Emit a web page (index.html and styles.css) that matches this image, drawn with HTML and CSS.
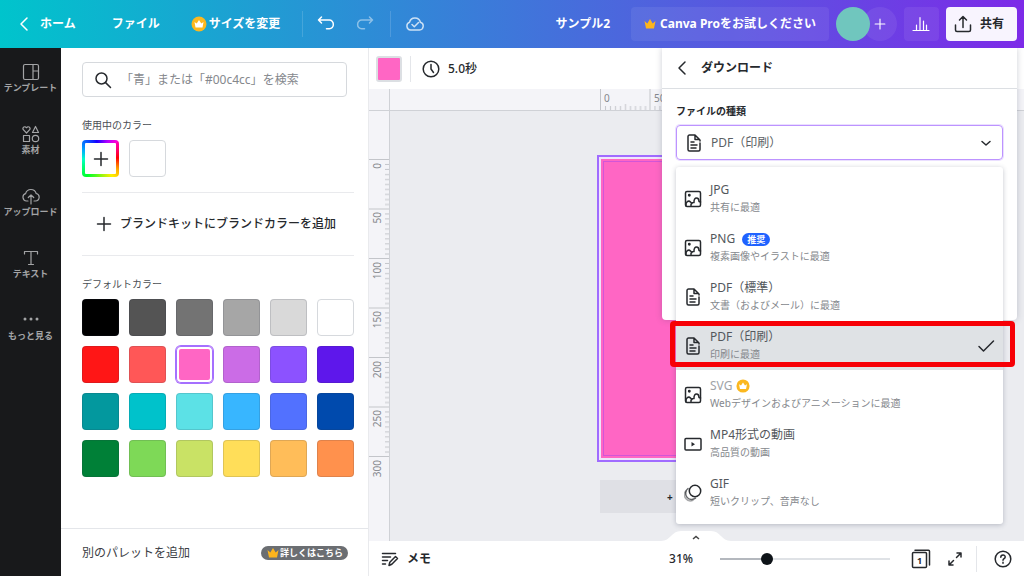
FILE: index.html
```html
<!DOCTYPE html>
<html lang="ja">
<head>
<meta charset="utf-8">
<meta name="viewport" content="width=device-width, initial-scale=1">
<title>サンプル2</title>
<link rel="stylesheet" href="styles.css">
</head>
<body>
<svg class="defs" aria-hidden="true">
  <symbol id="crown" viewBox="0 0 12 12"><path d="M.5 3l2.800 2.500L6 1l2.700 4.500L11.500 3l-1.500 7.500H2z" fill="currentColor"/></symbol>
  <symbol id="coin" viewBox="0 0 16 16"><circle cx="8" cy="8" r="7.500" fill="#fbb81f"/><path d="M3.500 6l2.200 1.500L8 4l2.300 3.500L12.500 6l-1 5.500h-7z" fill="#fff"/></symbol>
  <symbol id="back" viewBox="0 0 12 16"><path d="M9 2L3 8l6 6"/></symbol>
  <symbol id="plus" viewBox="0 0 16 16"><path d="M8 1.500v13M1.500 8h13"/></symbol>
  <symbol id="image" viewBox="0 0 18 18"><rect x="1.500" y="1.500" width="15" height="15" rx="1.500"/><path d="M2 15.500C1.500 12 4.500 10 6.500 12L8 13.500M7 16c-.5-2.500 1.500-4 3-3.500C9.800 9.500 11 8 12.500 8S15 9.500 15 11.500l1.500.5"/><circle cx="5.300" cy="5.300" r=".7" fill="currentColor"/></symbol>
  <symbol id="doc" viewBox="0 0 18 18"><path d="M10 1H4.500A1.500 1.500 0 003 2.500v13A1.500 1.500 0 004.500 17h9a1.500 1.500 0 001.500-1.500V9M10 1l5 5v1M10 1v4.500h4.500M6 8h3M6 11h6M6 14h5"/></symbol>
</svg>

<header class="topbar">
  <nav class="topbar-left">
    <a class="home" href="#"><svg class="line i-back"><use href="#back"/></svg>ホーム</a>
    <button class="bare file">ファイル</button>
    <button class="bare resize"><svg class="i16"><use href="#coin"/></svg>サイズを変更</button>
    <span class="vline"></span>
    <button class="bare" aria-label="元に戻す"><svg class="line i18" viewBox="0 0 18 18"><path d="M4.500 2L1.500 5l3 3M1.500 5H12a4 4 0 014.300 4.300A4 4 0 0112 13.800H9.500"/></svg></button>
    <button class="bare redo" aria-label="やり直す"><svg class="line i18" viewBox="0 0 18 18"><path d="M13.500 2l3 3-3 3M16.500 5H6a4 4 0 00-4.300 4.300A4 4 0 006 13.800h2.500"/></svg></button>
    <span class="vline"></span>
    <button class="bare cloud" aria-label="保存済み"><svg class="line i20" viewBox="0 0 20 20"><path d="M5.500 16A4 4 0 014.500 8.300 5.600 5.600 0 0115.400 8.200a4 4 0 01-.9 7.800zM7 10.500l2.300 2.300 4.200-4.300"/></svg></button>
  </nav>
  <div class="topbar-right">
    <span class="doc-title">サンプル2</span>
    <button class="tinted pro"><svg class="i12 gold"><use href="#crown"/></svg>Canva Proをお試しください</button>
    <div class="people"><span class="avatar"></span><button class="invite" aria-label="メンバーを追加"><svg class="line i12"><use href="#plus"/></svg></button></div>
    <button class="tinted chart" aria-label="インサイト"><svg class="line i18" viewBox="0 0 18 18"><path d="M1 15.500h16M4.500 15.500V10M8 15.500V2.500M11.500 15.500V6M14.500 15.500V10"/></svg></button>
    <button class="share"><svg class="line i18" viewBox="0 0 18 18"><path d="M1.500 10v5A1.500 1.500 0 003 16.500h12a1.500 1.500 0 001.500-1.500v-5M9 12.500V1.500M5.500 5L9 1.500 12.500 5"/></svg>共有</button>
  </div>
</header>

<div class="workspace">
  <nav class="rail">
    <a href="#"><svg class="line i18" viewBox="0 0 18 18"><rect x="1.500" y="1.500" width="15" height="15" rx="1.500"/><path d="M11 1.500v15M11 8h5.500"/></svg>テンプレート</a>
    <a href="#"><svg class="line i18" viewBox="0 0 18 18"><path d="M4.500 8L1.300 4.700C0 2.600 3 .4 4.500 2.800 6 .4 9 2.600 7.700 4.700zM13.500 1.500l3 6h-6z"/><rect x="1.500" y="10.500" width="6" height="6"/><circle cx="13.500" cy="13.500" r="3.200"/></svg>素材</a>
    <a href="#"><svg class="line i18" viewBox="0 0 18 18"><path d="M6 14H4.500A3.800 3.800 0 013.600 6.600 5.500 5.500 0 0114.200 6.500 3.800 3.800 0 0113.500 14H12M9 17V8M6.300 10.500L9 7.800l2.700 2.700"/></svg>アップロード</a>
    <a href="#"><svg class="line i18" viewBox="0 0 18 18"><path d="M2.500 5V2.500h13V5M9 2.500v13M6.500 15.500h5"/></svg>テキスト</a>
    <a href="#"><svg class="i18" viewBox="0 0 18 18" fill="currentColor"><circle cx="3" cy="8" r="1.500"/><circle cx="9" cy="8" r="1.500"/><circle cx="15" cy="8" r="1.500"/></svg>もっと見る</a>
  </nav>

  <aside class="panel">
    <div class="panel-body">
      <label class="search"><svg class="line i18" viewBox="0 0 18 18"><circle cx="7.500" cy="7.500" r="5.500"/><path d="M11.600 11.600L16.500 16.500"/></svg><input type="text" aria-label="カラーを検索" placeholder="「青」または「#00c4cc」を検索"></label>
      <h2 class="caption">使用中のカラー</h2>
      <div class="swatches">
        <button class="swatch rainbow" aria-label="新しいカラーを追加"><svg class="line i16"><use href="#plus"/></svg></button>
        <button class="swatch white" aria-label="白"></button>
      </div>
      <button class="brand"><svg class="line i16"><use href="#plus"/></svg>ブランドキットにブランドカラーを追加</button>
      <h2 class="caption default">デフォルトカラー</h2>
      <div class="swatches">
        <button class="swatch" style="background:#000000" aria-label="#000000"></button>
        <button class="swatch" style="background:#545454" aria-label="#545454"></button>
        <button class="swatch" style="background:#737373" aria-label="#737373"></button>
        <button class="swatch" style="background:#a6a6a6" aria-label="#a6a6a6"></button>
        <button class="swatch" style="background:#d9d9d9" aria-label="#d9d9d9"></button>
        <button class="swatch white" aria-label="#ffffff"></button>
        <button class="swatch" style="background:#ff1616" aria-label="#ff1616"></button>
        <button class="swatch" style="background:#ff5757" aria-label="#ff5757"></button>
        <button class="swatch chosen" style="background:#ff66c4" aria-label="#ff66c4"></button>
        <button class="swatch" style="background:#cb6ce6" aria-label="#cb6ce6"></button>
        <button class="swatch" style="background:#8c52ff" aria-label="#8c52ff"></button>
        <button class="swatch" style="background:#5e17eb" aria-label="#5e17eb"></button>
        <button class="swatch" style="background:#03989e" aria-label="#03989e"></button>
        <button class="swatch" style="background:#00c2cb" aria-label="#00c2cb"></button>
        <button class="swatch" style="background:#5ce1e6" aria-label="#5ce1e6"></button>
        <button class="swatch" style="background:#38b6ff" aria-label="#38b6ff"></button>
        <button class="swatch" style="background:#5271ff" aria-label="#5271ff"></button>
        <button class="swatch" style="background:#004aad" aria-label="#004aad"></button>
        <button class="swatch" style="background:#008037" aria-label="#008037"></button>
        <button class="swatch" style="background:#7ed957" aria-label="#7ed957"></button>
        <button class="swatch" style="background:#c9e265" aria-label="#c9e265"></button>
        <button class="swatch" style="background:#ffde59" aria-label="#ffde59"></button>
        <button class="swatch" style="background:#ffbd59" aria-label="#ffbd59"></button>
        <button class="swatch" style="background:#ff914d" aria-label="#ff914d"></button>
      </div>
    </div>
    <footer class="panel-foot">別のパレットを追加<button class="more"><svg class="i12 gold"><use href="#crown"/></svg>詳しくはこちら</button></footer>
  </aside>

  <main class="editor">
    <div class="toolbar">
      <button class="bg-color" aria-label="背景カラー"></button>
      <span class="vline gray"></span>
      <button class="timing"><svg class="line i18" viewBox="0 0 18 18"><circle cx="9" cy="9" r="7.800"/><path d="M9 4.500V9l2.500 3.500"/></svg>5.0秒</button>
    </div>
    <div class="stage">
      <div class="corner"></div>
      <div class="ruler-x">
        <svg width="100%" height="21"><defs><pattern id="tx" x="210" width="49.500" height="21" patternUnits="userSpaceOnUse"><path d="M.5 0v21M5.500 17v4M10.500 17v4M15.500 17v4M20.500 17v4M25.500 15v6M30.500 17v4M35.500 17v4M40.500 17v4M45.500 17v4" stroke="#c3c5ca"/></pattern></defs><rect x="210" width="212" height="21" fill="url(#tx)"/><text x="214" y="13">0</text><text x="264" y="13">50</text></svg>
      </div>
      <div class="ruler-y">
        <svg width="20" height="400"><defs><pattern id="ty" y="48" width="20" height="49.500" patternUnits="userSpaceOnUse"><path d="M0 .5h20M16 5.500h4M16 10.500h4M16 15.500h4M16 20.500h4M16 25.500h4M16 30.500h4M16 35.500h4M16 40.500h4M16 45.500h4" stroke="#c3c5ca"/></pattern></defs><rect y="48" width="20" height="298" fill="url(#ty)"/>
          <g text-anchor="end"><text transform="translate(12 52) rotate(-90)">0</text><text transform="translate(12 101) rotate(-90)">50</text><text transform="translate(12 151) rotate(-90)">100</text><text transform="translate(12 200) rotate(-90)">150</text><text transform="translate(12 250) rotate(-90)">200</text><text transform="translate(12 299) rotate(-90)">250</text><text transform="translate(12 349) rotate(-90)">300</text></g></svg>
      </div>
      <div class="canvas">
        <div class="page"><div class="sheet"><div class="bleed"></div></div></div>
        <button class="add-page" aria-label="ページを追加">+</button>
      </div>
    </div>
    <footer class="statusbar">
      <svg class="tab" viewBox="0 0 70 10"><path d="M0 10C10 10 10 0 20 0h30c10 0 10 10 20 10z" fill="#fff"/><path d="M32 8l3-2.500L38 8" fill="none" stroke="#444" stroke-width="1.500"/></svg>
      <button class="notes"><svg class="line i18" viewBox="0 0 18 18"><path d="M1.500 3.500h13M1.500 7h8M1.500 10.500h5M1.500 14h3M8 15.500l.8-3.300L14.500 6.500l2 2-5.700 5.800z"/></svg>メモ</button>
      <div class="status-right">
        <span class="zoom">31%</span>
        <input type="range" min="0" max="100" value="26" aria-label="ズーム">
        <button class="plain" aria-label="ページ"><svg class="line i20" viewBox="0 0 20 20"><rect x="1.500" y="3.500" width="14" height="15" rx="1"/><path d="M4 1.200h13.500a1 1 0 011 1V16"/><text x="8.500" y="14.500" text-anchor="middle">1</text></svg></button>
        <button class="plain full" aria-label="全画面表示"><svg class="line i16" viewBox="0 0 16 16"><path d="M9.500 6.500L14 2M10 2h4v4M6.500 9.500L2 14M2 10v4h4"/></svg></button>
        <span class="vline gray"></span>
        <button class="plain" aria-label="ヘルプ"><svg class="line i18" viewBox="0 0 18 18"><circle cx="9" cy="9" r="7.800"/><path d="M6.800 7.300C6.800 4.200 11.300 4.400 11.200 7c0 1.600-2.200 1.700-2.200 3.300M9 12.200v1"/></svg></button>
      </div>
    </footer>
  </main>
</div>

<section class="export">
  <h1><svg class="line i-back"><use href="#back"/></svg>ダウンロード</h1>
  <div class="export-body">
    <label for="type">ファイルの種類</label>
    <div class="field">
      <svg class="line i18"><use href="#doc"/></svg>
      <select id="type"><option>PDF（印刷）</option></select>
      <svg class="line i12 caret" viewBox="0 0 12 12"><path d="M2 4.500l4 3.500 4-3.500"/></svg>
    </div>
    <ul class="menu">
      <li><button><svg class="line i18"><use href="#image"/></svg><span class="text"><b>JPG</b><small>共有に最適</small></span></button></li>
      <li><button><svg class="line i18"><use href="#image"/></svg><span class="text"><b>PNG <i class="pill">推奨</i></b><small>複素画像やイラストに最適</small></span></button></li>
      <li><button><svg class="line i18"><use href="#doc"/></svg><span class="text"><b>PDF（標準）</b><small>文書（およびメール）に最適</small></span></button></li>
      <li class="selected"><button><svg class="line i18"><use href="#doc"/></svg><span class="text"><b>PDF（印刷）</b><small>印刷に最適</small></span><svg class="line i18" viewBox="0 0 18 18"><path d="M2 9.500l4.500 4.500L16.500 4"/></svg></button></li>
      <li class="locked"><button><svg class="line i18"><use href="#image"/></svg><span class="text"><b>SVG <svg class="i14"><use href="#coin"/></svg></b><small>Webデザインおよびアニメーションに最適</small></span></button></li>
      <li><button><svg class="line i18" viewBox="0 0 18 18"><rect x="1" y="3.500" width="16" height="11.500" rx="1"/><path d="M7.500 7v4.500L11 9.200z" fill="currentColor" stroke="none"/></svg><span class="text"><b>MP4形式の動画</b><small>高品質の動画</small></span></button></li>
      <li><button><svg class="line i18" viewBox="0 0 18 18"><circle cx="11" cy="7" r="5.700"/><path d="M4 4.500a6 6 0 007.500 9.700" opacity=".7"/><path d="M1.800 7a6 6 0 007.200 9.200" opacity=".4"/></svg><span class="text"><b>GIF</b><small>短いクリップ、音声なし</small></span></button></li>
    </ul>
  </div>
</section>
</body>
</html>
```

FILE: styles.css
```css
* { box-sizing: border-box; }
html, body { height: 100%; }
body {
  margin: 0;
  display: flex;
  flex-direction: column;
  overflow: hidden;
  font: 12px/18px "Noto Sans", "Noto Sans CJK JP", sans-serif;
  color: #26292d;
  background: #fff;
}
button, input, select { font: inherit; color: inherit; }
button { border: 0; padding: 0; background: none; display: flex; align-items: center; white-space: nowrap; }
a { color: inherit; text-decoration: none; }
h1, h2, ul { margin: 0; padding: 0; font-weight: 400; list-style: none; }
svg { display: block; flex: none; }
.defs { position: absolute; width: 0; height: 0; }
.line { fill: none; stroke: currentColor; stroke-width: 1.500; stroke-linecap: round; stroke-linejoin: round; }
.i12 { width: 12px; height: 12px; }
.i14 { width: 14px; height: 14px; }
.i16 { width: 16px; height: 16px; }
.i18 { width: 18px; height: 18px; }
.i20 { width: 20px; height: 20px; }
.i-back { width: 12px; height: 16px; }
.gold { color: #fdb51c; }
.vline { width: 1px; height: 26px; background: rgba(255, 255, 255, .15); }
.vline.gray { background: #e4e6ea; }

/* top bar */
.topbar {
  flex: none;
  height: 48px;
  display: flex;
  justify-content: space-between;
  align-items: center;
  padding: 0 7px 0 18px;
  color: #fff;
  font-weight: 700;
  background: linear-gradient(90deg, #00c4cc, #7d2ae8);
}
.topbar-left, .topbar-right, .home { display: flex; align-items: center; }
.home { gap: 10px; }
.file { margin-left: 36px; }
.resize { gap: 2px; margin: 0 22px 0 31px; }
.topbar-left .vline + .bare { margin-left: 14px; }
.topbar .redo { margin: 0 16px 0 21px; opacity: .45; }
.cloud { opacity: .75; }
.topbar-right { gap: 7px; }
.doc-title { margin-right: 14px; }
.tinted { height: 34px; border-radius: 4px; background: rgba(255, 255, 255, .07); }
.pro { gap: 4px; padding: 0 13px; }
.people { display: flex; }
.avatar { width: 34px; height: 34px; border-radius: 50%; background: #70c6be; z-index: 1; }
.invite { width: 34px; height: 34px; margin-left: -7px; border-radius: 50%; justify-content: center; background: rgba(255, 255, 255, .07); }
.chart { width: 35px; justify-content: center; }
.chart .line { stroke-width: 1.200; }
.share { height: 34px; gap: 8px; padding: 0 13px 0 8px; border-radius: 4px; background: #f8f4fe; color: #26292d; }

.workspace { flex: 1; min-height: 0; display: flex; }

/* left rail */
.rail { flex: none; width: 61px; padding-top: 15px; display: flex; flex-direction: column; gap: 30px; background: #18191b; color: #a3a4a6; font-size: 9px; line-height: 14px; font-weight: 700; }
.rail a { display: flex; flex-direction: column; align-items: center; white-space: nowrap; }
.rail .line { stroke-width: 1.200; }

/* colour panel */
.panel { flex: none; width: 308px; display: flex; flex-direction: column; border-right: 1px solid #e9eaed; }
.panel-body { flex: 1; padding: 14px 14px 0 21px; }
.search { height: 35px; margin-right: 7px; padding: 0 11px; display: flex; align-items: center; gap: 9px; border: 1px solid #d6d9dd; border-radius: 4px; }
.search input { flex: 1; min-width: 0; border: 0; padding: 0; outline: 0; background: none; }
.search input::placeholder { color: #85888d; opacity: 1; }
.caption { padding: 20px 0 7px; font-size: 10px; line-height: 16px; color: #4b4f54; }
.swatches { display: grid; grid-template-columns: repeat(6, 37px); gap: 10px; }
.swatch { height: 37px; justify-content: center; border-radius: 4px; border: 1px solid rgba(40, 50, 70, .15); }
.swatch.white { background: #fff; border-color: #d6d9dd; }
.swatch.chosen { border: 0; border-radius: 5px; box-shadow: inset 0 0 0 1px #a570ff, inset 0 0 0 3px #fff, 0 0 0 1px #a570ff; }
.swatch.rainbow {
  border: 3px solid transparent;
  background: linear-gradient(#fff, #fff) padding-box,
    conic-gradient(from 45deg, #ff00b4, #ff0000 12%, #ffae00 22%, #fff000 28%, #00ff2a 48%, #00ffc8 62%, #00a8ff 70%, #1500ff 84%, #b400ff 94%, #ff00d4) border-box;
}
.brand { width: 100%; height: 64px; margin-top: 15px; gap: 8px; padding-left: 14px; border: solid #e9eaed; border-width: 1px 0; font-weight: 500; }
.caption.default { padding-top: 20px; }
.panel-foot { height: 48px; padding: 0 20px 0 21px; display: flex; align-items: center; justify-content: space-between; border-top: 1px solid #e4e6ea; color: #3c4045; }
.more { height: 14px; padding: 0 5px 0 6px; gap: 1px; border-radius: 7px; background: #6b6e72; color: #fff; font-size: 9px; line-height: 14px; font-weight: 700; }

/* editor */
.editor { flex: 1; min-width: 0; display: flex; flex-direction: column; }
.toolbar { height: 41px; padding-left: 7px; display: flex; align-items: center; }
.bg-color { width: 26px; height: 26px; margin-right: 8px; border: 2px solid #dcdfe3; border-radius: 3px; background: #ff66c4; }
.timing { margin-left: 11px; gap: 8px; font-weight: 500; }
.stage { flex: 1; min-height: 0; display: grid; grid-template-columns: 21px 1fr; grid-template-rows: 22px 1fr; background: #ebecf0; overflow: hidden; }
.corner, .ruler-x, .ruler-y { background: #f4f4f8; overflow: hidden; }
.corner, .ruler-x { border-bottom: 1px solid #cfd1d6; }
.corner, .ruler-y { border-right: 1px solid #cfd1d6; }
.stage text { font-size: 10px; fill: #85888d; }
.canvas { min-height: 0; display: flex; flex-direction: column; align-items: center; padding: 44px 2px 0 0; overflow: hidden; }
.page { flex: none; width: 219px; height: 307px; padding: 2px; border: 2px solid #a06bff; background: #eee6fb; }
.sheet { height: 100%; padding: 2px; background: #ff66c4; }
.bleed { height: 100%; border: 1px solid #d256d8; }
.add-page { flex: none; width: 212px; height: 33px; margin-top: 18px; padding-left: 67px; background: #dfe0e5; font-size: 10px; font-weight: 700; }

/* status bar */
.statusbar { position: relative; flex: none; height: 35px; padding: 0 12px; display: flex; align-items: center; justify-content: space-between; background: #fff; }
.tab { position: absolute; left: 292px; bottom: 100%; width: 70px; height: 10px; }
.notes { gap: 8px; font-weight: 700; }
.status-right { display: flex; align-items: center; }
.zoom { margin-right: 27px; font-weight: 500; }
.plain text { font: 700 9px "Noto Sans", sans-serif; fill: currentColor; stroke: none; }
.full { margin: 0 13px 0 16px; }
.status-right .gray { margin-right: 17px; }
input[type=range] { appearance: none; width: 170px; height: 12px; margin: 0 21px 0 0; background: linear-gradient(90deg, #b4b8be 28%, #dfe2e6 28%) center / 100% 2px no-repeat; }
input[type=range]::-webkit-slider-thumb { appearance: none; width: 12px; height: 12px; border-radius: 50%; background: #0e1318; }

/* download panel */
.export { position: absolute; top: 48px; right: 7px; width: 355px; height: 272px; border-radius: 0 0 4px 4px; background: #fff; box-shadow: 0 0 6px rgba(60, 65, 90, .25); clip-path: inset(0 -12px -300px -12px); }
.export h1 { height: 41px; padding-left: 14px; display: flex; align-items: center; gap: 13px; border-bottom: 1px solid #dcdfe3; font-size: 12px; font-weight: 700; }
.export-body { position: relative; padding: 13px 14px 0; }
.export label { display: block; font-size: 10px; line-height: 18px; font-weight: 700; }
.field { height: 35px; margin-top: 5px; padding: 0 10px 0 8px; display: flex; align-items: center; gap: 8px; border: 1px solid #bd93ff; border-radius: 4px; box-shadow: 0 0 0 1px #eadfff; }
.field select { flex: 1; appearance: none; border: 0; padding: 0; outline: 0; background: none; color: #5b5f64; }
.menu { position: absolute; top: 78px; left: 14px; right: 14px; padding: 7px 0; border-radius: 3px; background: #fff; box-shadow: 0 1px 5px rgba(60, 65, 90, .3); }
.menu li { position: relative; }
.menu button { width: 100%; height: 49px; padding: 0 8px; gap: 8px; text-align: left; }
.text { flex: 1; display: flex; flex-direction: column; }
.text b { display: flex; align-items: center; gap: 7px; height: 17px; font-weight: 400; color: #53575c; }
.text small { font-size: 10px; line-height: 17px; color: #85888d; }
.pill { height: 13px; padding: 0 5px; border-radius: 7px; background: #1f62ff; color: #fff; font: 700 9px/13px "Noto Sans CJK JP", sans-serif; }
.locked b { gap: 4px; color: #a0a3a7; }
.selected button { background: #dfe2e5; }
.selected::after { content: ""; position: absolute; inset: 0 -12px 3px -6px; border: 5px solid #f70006; border-radius: 4px; }
```
